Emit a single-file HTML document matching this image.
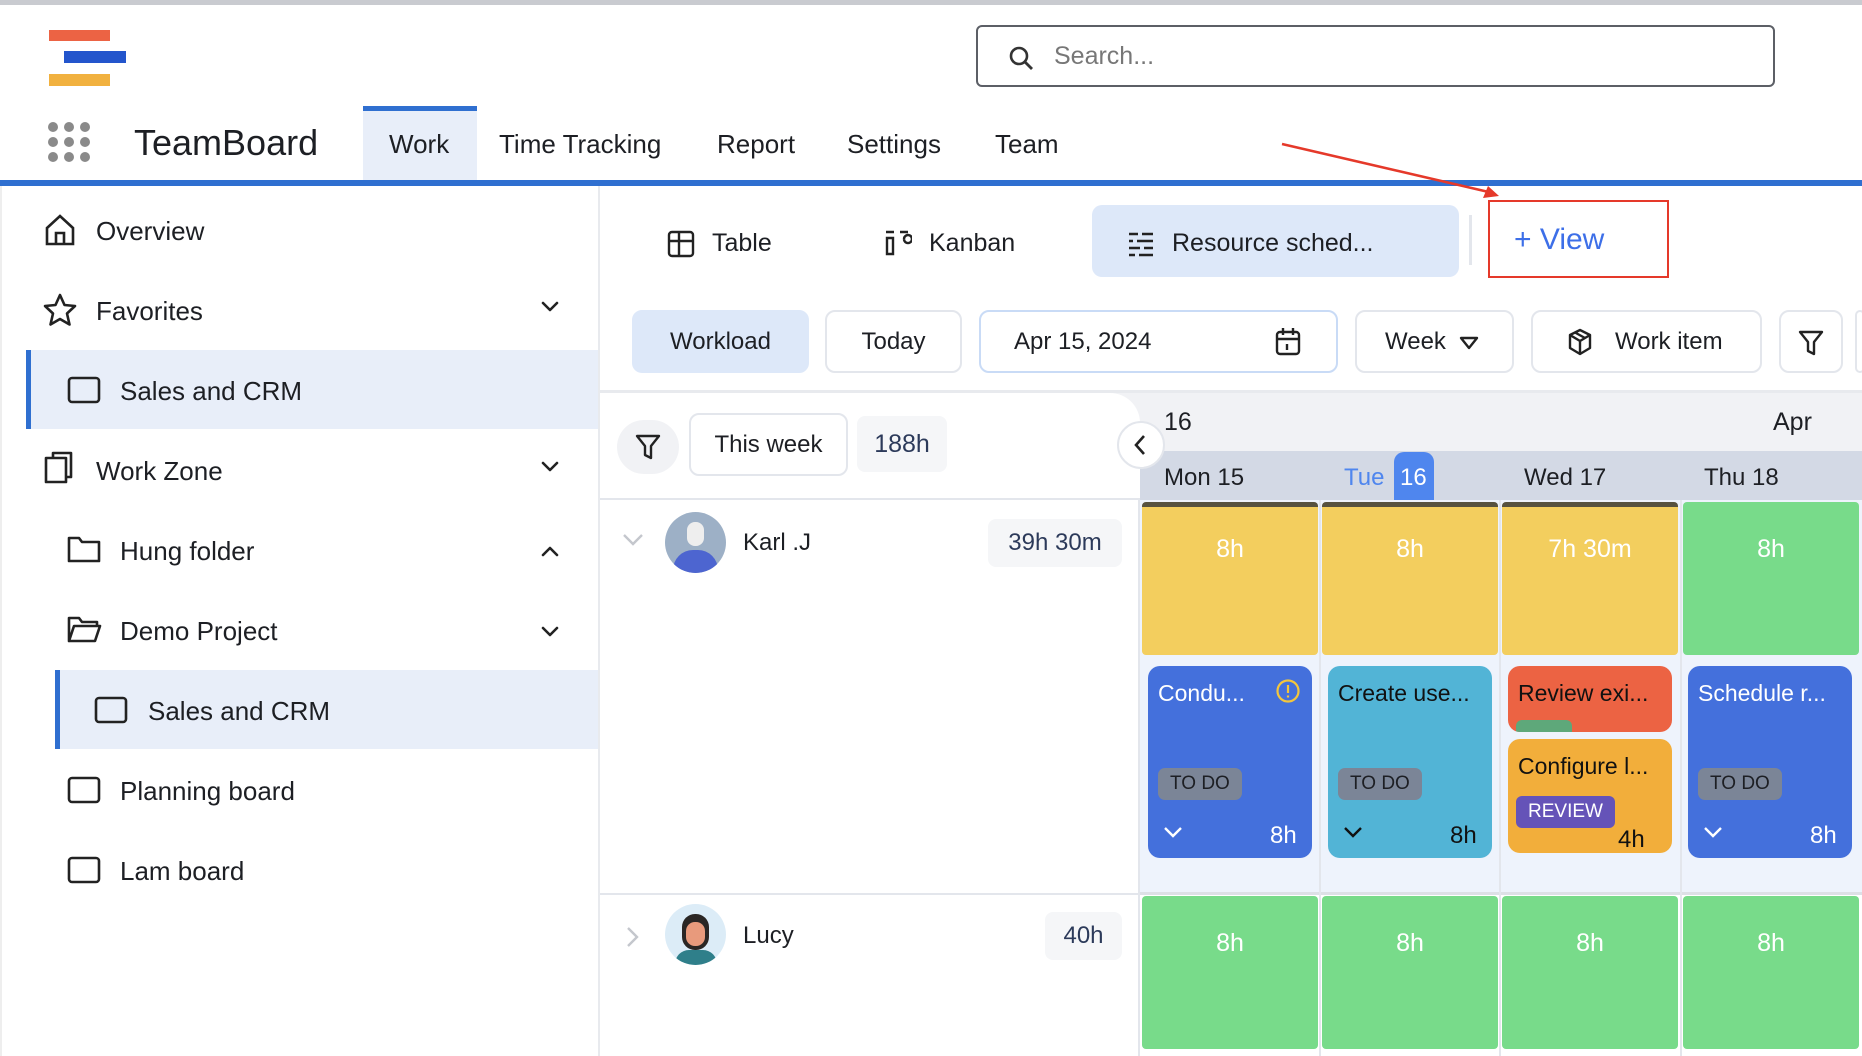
<!DOCTYPE html>
<html><head><meta charset="utf-8"><style>
*{box-sizing:border-box;margin:0;padding:0}
body{width:1862px;height:1056px;overflow:hidden;background:#fff;font-family:"Liberation Sans",sans-serif;color:#1d1f24;position:relative}
.a{position:absolute}
.t{position:absolute;white-space:nowrap}
.side{font-size:26px}
.btn{position:absolute;border:2px solid #e3e6ec;border-radius:10px;background:#fff;font-size:24px;display:flex;align-items:center}
.blk{position:absolute;width:176px;border-radius:4px;color:#fff;font-size:25px;text-align:center;padding-top:28px}
.g{padding-top:33px}
.card{position:absolute;border-radius:12px;font-size:23px;padding:14px 10px}
.tag{position:absolute;background:#7b8597;color:#1d1f24;font-size:19px;border-radius:7px;padding:5px 12px}
svg{position:absolute}
</style></head><body>
<div class="a" style="left:0;top:0;width:1862px;height:5px;background:#c9cbd0"></div>
<div class="a" style="left:49px;top:30px;width:61px;height:11px;background:#ec6344"></div>
<div class="a" style="left:64px;top:51px;width:62px;height:12px;background:#2355cc"></div>
<div class="a" style="left:49px;top:74px;width:61px;height:12px;background:#f1b13f"></div>
<div class="a" style="left:976px;top:25px;width:799px;height:62px;border:2px solid #5c5f66;border-radius:6px"></div>
<svg style="left:1008px;top:45px" width="26" height="26" viewBox="0 0 26 26"><circle cx="11" cy="11" r="8" fill="none" stroke="#333" stroke-width="2.6"/><path d="M17 17l7 7" stroke="#333" stroke-width="2.8"/></svg>
<div class="t" style="left:1054px;top:42px;font-size:25px;color:#777">Search...</div>
<svg style="left:47px;top:121px" width="44" height="42"><g fill="#8a8a8a"><circle cx="6" cy="6" r="5"/><circle cx="22" cy="6" r="5"/><circle cx="38" cy="6" r="5"/><circle cx="6" cy="21" r="5"/><circle cx="22" cy="21" r="5"/><circle cx="38" cy="21" r="5"/><circle cx="6" cy="36" r="5"/><circle cx="22" cy="36" r="5"/><circle cx="38" cy="36" r="5"/></g></svg>
<div class="t" style="left:134px;top:122px;font-size:36px">TeamBoard</div>
<div class="a" style="left:363px;top:106px;width:114px;height:74px;background:#e8eef9;border-top:5px solid #2f6fd0"></div>
<div class="t" style="left:389px;top:129px;font-size:26px">Work</div>
<div class="t" style="left:499px;top:129px;font-size:26px">Time Tracking</div>
<div class="t" style="left:717px;top:129px;font-size:26px">Report</div>
<div class="t" style="left:847px;top:129px;font-size:26px">Settings</div>
<div class="t" style="left:995px;top:129px;font-size:26px">Team</div>
<div class="a" style="left:0;top:180px;width:1862px;height:6px;background:#2f6fd0"></div>
<svg style="left:1280px;top:138px" width="230" height="70"><path d="M2 6L213 55" stroke="#e5392a" stroke-width="2.5"/><path d="M219 58L203 60L208 48Z" fill="#e5392a"/></svg>
<div class="a" style="left:0;top:186px;width:600px;height:870px;border-right:2px solid #e8eaee;border-left:2px solid #eee"></div>
<svg style="left:43px;top:213px" width="34" height="34" viewBox="0 0 34 34" fill="none" stroke="#222" stroke-width="2.6"><path d="M4 15L17 3l13 12v16H4z"/><path d="M13 31V20h8v11"/></svg>
<div class="t side" style="left:96px;top:216px">Overview</div>
<svg style="left:42px;top:292px" width="36" height="36" viewBox="0 0 36 36" fill="none" stroke="#222" stroke-width="2.6" stroke-linejoin="round"><path d="M18 3l4.5 10 10.5 1-8 7.5 2.5 11L18 27l-9.5 5.5 2.5-11L3 14l10.5-1z"/></svg>
<div class="t side" style="left:96px;top:296px">Favorites</div>
<div class="a" style="left:26px;top:350px;width:572px;height:79px;background:#e8eef9;border-left:5px solid #2f6fd0"></div>
<div class="t side" style="left:120px;top:376px">Sales and CRM</div>
<div class="t side" style="left:96px;top:456px">Work Zone</div>
<div class="t side" style="left:120px;top:536px">Hung folder</div>
<div class="t side" style="left:120px;top:616px">Demo Project</div>
<div class="a" style="left:55px;top:670px;width:543px;height:79px;background:#e8eef9;border-left:5px solid #2f6fd0"></div>
<div class="t side" style="left:148px;top:696px">Sales and CRM</div>
<div class="t side" style="left:120px;top:776px">Planning board</div>
<div class="t side" style="left:120px;top:856px">Lam board</div>
<svg style="left:0;top:0" width="600" height="1056" fill="none" stroke="#222" stroke-width="2.6" stroke-linecap="round" stroke-linejoin="round">
<rect x="69" y="378" width="30" height="24" rx="3"/>
<rect x="96" y="698" width="30" height="24" rx="3"/>
<rect x="69" y="778" width="30" height="24" rx="3"/>
<rect x="69" y="858" width="30" height="24" rx="3"/>
<path d="M46 458h20v24H46zM53 458v-5h18v24h-5" />
<path d="M69 538h10l3 4h17v19H69z"/>
<path d="M69 618h10l3 4h15v4M69 618v23h26l5-15H74l-5 15"/>
<path d="M543 303l7 7 7-7M543 463l7 7 7-7M543 628l7 7 7-7M543 555l7-7 7 7"/>
</svg>
<svg style="left:667px;top:230px" width="28" height="28" fill="none" stroke="#222" stroke-width="2.4"><rect x="2" y="2" width="24" height="24" rx="3"/><path d="M2 11h24M12 2v24"/></svg>
<div class="t" style="left:712px;top:229px;font-size:25px">Table</div>
<svg style="left:884px;top:229px" width="28" height="28" fill="none" stroke="#222" stroke-width="2.4"><path d="M2 3h8M16 3h8M3 9v16h6V9zM20 10a4 4 0 1 1 0 .1"/></svg>
<div class="t" style="left:929px;top:229px;font-size:25px">Kanban</div>
<div class="a" style="left:1092px;top:205px;width:367px;height:72px;background:#dde8f9;border-radius:10px"></div>
<svg style="left:1127px;top:231px" width="28" height="26" stroke="#222" stroke-width="2.4"><path d="M2 3h9M15 3h11M2 10h4M10 10h16M2 17h11M17 17h9M2 24h6M12 24h14"/></svg>
<div class="t" style="left:1172px;top:229px;font-size:25px">Resource sched...</div>
<div class="a" style="left:1469px;top:215px;width:3px;height:50px;background:#e3e6ec"></div>
<div class="a" style="left:1488px;top:200px;width:181px;height:78px;border:2.5px solid #e5392a"></div>
<div class="t" style="left:1514px;top:223px;font-size:30px;color:#3d6fe8">+ View</div>
<div class="btn" style="left:632px;top:310px;width:177px;height:63px;background:#dde8f9;border-color:#dde8f9;justify-content:center">Workload</div>
<div class="btn" style="left:825px;top:310px;width:137px;height:63px;justify-content:center">Today</div>
<div class="btn" style="left:979px;top:310px;width:359px;height:63px;border-color:#c9dbf6;padding-left:33px">Apr 15, 2024</div>
<svg style="left:1275px;top:327px" width="26" height="30" fill="none" stroke="#222" stroke-width="2.4"><rect x="2" y="5" width="22" height="22" rx="3"/><path d="M2 12h22M8 1v7M18 1v7M12 17v6"/></svg>
<div class="btn" style="left:1355px;top:310px;width:159px;height:63px;padding-left:28px">Week</div>
<svg style="left:1459px;top:336px" width="20" height="14"><path d="M2 2h16L10 12z" fill="none" stroke="#222" stroke-width="2.4" stroke-linejoin="round"/></svg>
<div class="btn" style="left:1531px;top:310px;width:231px;height:63px;padding-left:82px">Work item</div>
<svg style="left:1567px;top:328px" width="26" height="28" fill="none" stroke="#222" stroke-width="2.4" stroke-linejoin="round"><path d="M13 2l10 5v13l-10 6-10-6V7zM3 7l10 6 10-6M13 13v13M8 4.5l10 5.5"/></svg>
<div class="btn" style="left:1779px;top:310px;width:64px;height:63px"></div>
<svg style="left:1798px;top:329px" width="26" height="28" fill="none" stroke="#222" stroke-width="2.4" stroke-linejoin="round"><path d="M2 3h22l-8 10v12l-6-3V13z"/></svg>
<div class="a" style="left:1855px;top:310px;width:10px;height:63px;border:2px solid #e3e6ec;border-radius:8px"></div>
<div class="a" style="left:600px;top:390px;width:1262px;height:3px;background:#e8eaee"></div>
<div class="a" style="left:1110px;top:393px;width:752px;height:58px;background:#f1f2f5"></div>
<div class="a" style="left:600px;top:393px;width:540px;height:107px;background:#fff;border-top-right-radius:30px"></div>
<div class="a" style="left:1140px;top:451px;width:722px;height:50px;background:#d3d9e5"></div>
<div class="t" style="left:1164px;top:408px;font-size:25px">16</div>
<div class="t" style="left:1773px;top:408px;font-size:25px">Apr</div>
<div class="t" style="left:1164px;top:464px;font-size:24px">Mon 15</div>
<div class="t" style="left:1344px;top:464px;font-size:24px;color:#4f86ee">Tue</div>
<div class="a" style="left:1394px;top:452px;width:40px;height:49px;background:#4f86ee;border-radius:10px 10px 0 0"></div>
<div class="t" style="left:1400px;top:464px;font-size:24px;color:#fff">16</div>
<div class="t" style="left:1524px;top:464px;font-size:24px">Wed 17</div>
<div class="t" style="left:1704px;top:464px;font-size:24px">Thu 18</div>
<div class="a" style="left:1117px;top:421px;width:48px;height:48px;border-radius:50%;background:#fff;border:2px solid #e3e6ec"></div>
<svg style="left:1132px;top:433px" width="16" height="24"><path d="M12 3l-8 9 8 9" fill="none" stroke="#222" stroke-width="2.6"/></svg>
<div class="a" style="left:617px;top:420px;width:62px;height:54px;background:#f1f2f5;border-radius:27px"></div>
<svg style="left:635px;top:433px" width="26" height="28" fill="none" stroke="#222" stroke-width="2.4" stroke-linejoin="round"><path d="M2 3h22l-8 10v12l-6-3V13z"/></svg>
<div class="btn" style="left:689px;top:413px;width:159px;height:63px;justify-content:center">This week</div>
<div class="a" style="left:857px;top:416px;width:90px;height:56px;background:#f5f6f8;border-radius:8px;font-size:25px;color:#2c3a5a;text-align:center;line-height:56px">188h</div>
<div class="a" style="left:600px;top:498px;width:540px;height:2px;background:#e3e6ec"></div>
<svg style="left:622px;top:533px" width="22" height="14"><path d="M2 2l9 9 9-9" fill="none" stroke="#c4c7cd" stroke-width="2.4"/></svg>
<div class="a" style="left:665px;top:512px;width:61px;height:61px;border-radius:50%;background:#9db0c6;overflow:hidden"><div class="a" style="left:8px;top:38px;width:45px;height:30px;border-radius:20px 20px 0 0;background:#4d65d0"></div><div class="a" style="left:22px;top:10px;width:17px;height:24px;border-radius:8px;background:#eee"></div></div>
<div class="t" style="left:743px;top:529px;font-size:24px">Karl .J</div>
<div class="a" style="left:988px;top:519px;width:134px;height:48px;background:#f5f6f8;border-radius:8px;font-size:24px;color:#2c3a5a;text-align:center;line-height:48px">39h 30m</div>
<div class="a" style="left:600px;top:893px;width:540px;height:2px;background:#e3e6ec"></div>
<svg style="left:626px;top:926px" width="14" height="22"><path d="M2 2l9 9-9 9" fill="none" stroke="#c4c7cd" stroke-width="2.4"/></svg>
<div class="a" style="left:665px;top:904px;width:61px;height:61px;border-radius:50%;background:#dcecf7;overflow:hidden"><div class="a" style="left:10px;top:46px;width:42px;height:20px;border-radius:14px 14px 0 0;background:#2f7f8a"></div><div class="a" style="left:17px;top:10px;width:27px;height:36px;border-radius:13px;background:#2a2624"></div><div class="a" style="left:21px;top:18px;width:19px;height:24px;border-radius:9px;background:#e89a7c"></div></div>
<div class="t" style="left:743px;top:922px;font-size:24px">Lucy</div>
<div class="a" style="left:1045px;top:912px;width:77px;height:48px;background:#f5f6f8;border-radius:8px;font-size:24px;color:#2c3a5a;text-align:center;line-height:48px">40h</div>
<div class="a" style="left:1140px;top:500px;width:722px;height:394px;background:#eef3fc"></div>
<div class="a" style="left:1138px;top:500px;width:2px;height:556px;background:#e3e6ec"></div>
<div class="a" style="left:1140px;top:892px;width:722px;height:3px;background:#dde0e6"></div>
<div class="a" style="left:1319px;top:500px;width:2px;height:556px;background:#e3e6ec"></div>
<div class="a" style="left:1499px;top:500px;width:2px;height:556px;background:#e3e6ec"></div>
<div class="a" style="left:1680px;top:500px;width:2px;height:556px;background:#e3e6ec"></div>
<div class="blk" style="left:1142px;top:502px;height:153px;background:#f3ce5e;border-top:5px solid #57523f">8h</div>
<div class="blk" style="left:1322px;top:502px;height:153px;background:#f3ce5e;border-top:5px solid #57523f">8h</div>
<div class="blk" style="left:1502px;top:502px;height:153px;background:#f3ce5e;border-top:5px solid #57523f">7h 30m</div>
<div class="blk g" style="left:1683px;top:502px;height:153px;background:#78db8a">8h</div>
<div class="blk g" style="left:1142px;top:896px;height:153px;background:#78db8a">8h</div>
<div class="blk g" style="left:1322px;top:896px;height:153px;background:#78db8a">8h</div>
<div class="blk g" style="left:1502px;top:896px;height:153px;background:#78db8a">8h</div>
<div class="blk g" style="left:1683px;top:896px;height:153px;background:#78db8a">8h</div>
<div class="card" style="left:1148px;top:666px;width:164px;height:192px;background:#4470dc;color:#fff">Condu...</div>
<svg style="left:1275px;top:678px" width="26" height="26"><circle cx="13" cy="13" r="10.5" fill="none" stroke="#f3c63d" stroke-width="2.2"/><path d="M13 7v8M13 17.5v2" stroke="#f3c63d" stroke-width="2.2"/></svg>
<div class="tag" style="left:1158px;top:768px">TO DO</div>
<svg style="left:1163px;top:826px" width="20" height="14"><path d="M2 2l8 8 8-8" fill="none" stroke="#fff" stroke-width="2.4"/></svg>
<div class="t" style="left:1270px;top:822px;font-size:24px;color:#fff">8h</div>
<div class="card" style="left:1328px;top:666px;width:164px;height:192px;background:#52b4d6;color:#111">Create use...</div>
<div class="tag" style="left:1338px;top:768px">TO DO</div>
<svg style="left:1343px;top:826px" width="20" height="14"><path d="M2 2l8 8 8-8" fill="none" stroke="#111" stroke-width="2.4"/></svg>
<div class="t" style="left:1450px;top:822px;font-size:24px;color:#111">8h</div>
<div class="card" style="left:1508px;top:666px;width:164px;height:66px;background:#ec6343;color:#111;overflow:hidden">Review exi...<div class="a" style="left:8px;top:54px;width:56px;height:12px;border-radius:6px 6px 0 0;background:#5ea87a"></div></div>
<div class="card" style="left:1508px;top:739px;width:164px;height:114px;background:#f2ae3b;color:#111">Configure l...</div>
<div class="a" style="left:1516px;top:796px;width:99px;height:32px;background:#6553b8;border-radius:6px;color:#fff;font-size:19px;text-align:center;line-height:32px">REVIEW</div>
<div class="t" style="left:1618px;top:826px;font-size:24px;color:#111">4h</div>
<div class="card" style="left:1688px;top:666px;width:164px;height:192px;background:#4470dc;color:#fff">Schedule r...</div>
<div class="tag" style="left:1698px;top:768px">TO DO</div>
<svg style="left:1703px;top:826px" width="20" height="14"><path d="M2 2l8 8 8-8" fill="none" stroke="#fff" stroke-width="2.4"/></svg>
<div class="t" style="left:1810px;top:822px;font-size:24px;color:#fff">8h</div>
</body></html>
